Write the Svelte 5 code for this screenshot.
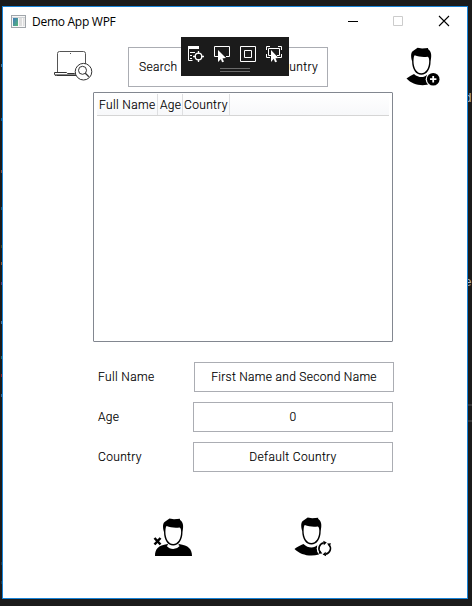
<script>
  const fields = [
    { label: 'Full Name', value: 'First Name and Second Name', shift: true, spacing: 0.3 },
    { label: 'Age', value: '0', spacing: 0.4 },
    { label: 'Country', value: 'Default Country', spacing: 0.36 }
  ];
  const leftMarks = [
    [64, '#4a748f'], [118, '#155c91'], [170, '#8b4a37'], [207, '#255a76'], [245, '#4d4819'],
    [262, '#9a5428'], [282, '#663568'], [321, '#4f7594'], [356, '#286a6b'], [374, '#9a2024'], [394, '#3b668b'], [562, '#26333d'], [581, '#213948']
  ];
</script>

{#snippet head()}
  <path d="M11 15C9.500 10 9.500 5.500 12.600 4.200L16.500 1.600l4.500.6 6-.5c-.3 1 .2 1.500 1 2 2.700 2.500 2.400 6.500 1.500 11.300C29.500 23 25.600 28.600 20.200 28.600S11 23 11 15z" fill="#000" />
  <path d="M12.400 15c0-3 .4-5.400 1.200-6 3.900 1.600 8 2 13 1.500.9.400 1.500 1.500 1.500 4.500 0 7-3.600 12.100-7.900 12.100S12.400 22 12.400 15z" fill="#fff" />
{/snippet}

<div class="desktop">
  {#each leftMarks as [y, color]}
    <i class="mark" style="top: {y}px; background: {color}"></i>
  {/each}
  <span class="code first">d</span>
  <span class="code second">e</span>
  <i class="line"></i><i class="line lower"></i>
  <main class="window">
    <header>
      <svg class="app-icon" width="16" height="16" viewBox="0 0 16 16">
        <defs>
          <linearGradient id="screen" x2="1" y2="1"><stop stop-color="#3f79bd" /><stop offset="1" stop-color="#56b775" /></linearGradient>
        </defs>
        <rect x=".5" y="1.500" width="14" height="12" fill="#f8f8f8" stroke="#a0a5aa" />
        <path d="M1 3.500h13" stroke="#d0d3d6" />
        <rect x="2" y="4" width="5" height="8" fill="url(#screen)" />
        <path d="M8 4h3v8H8zM12 4h1.500v8H12z" fill="#dedede" />
      </svg>
      <span class="title">Demo App WPF</span>
      <nav>
        <svg width="45" height="30"><path d="M13 14.500h10" stroke="#000" /></svg>
        <svg width="46" height="30"><path d="M13.500 9.500h9v9h-9z" fill="none" stroke="#ccc" /></svg>
        <svg width="41" height="30"><path d="M13 9l10 10m0-10l-10 10" stroke="#000" stroke-width="1.100" /></svg>
      </nav>
    </header>

    <section class="top">
      <svg class="laptop" width="40" height="34" viewBox="0 0 40 34" fill="none" stroke="#333">
        <path d="M4.500 23V4.500q0-2 2-2h24q2 0 2 2v11" stroke="#555" />
        <path d="M1.500 23.500h12l1 1h7l1-1h2M1.500 23.500v2q0 1 2 1h21" stroke="#333" />
        <path d="M2 25.500h22" stroke="#888" />
        <path d="M17 4.500h1" stroke="#555" />
        <circle cx="30.500" cy="22.700" r="8.300" fill="#fff" />
        <circle cx="29.500" cy="21.300" r="4" />
        <path d="M32.300 24.300l1.500 1.500m0-.2l2 2.200" stroke-width="1.300" />
      </svg>
      <div class="search">
        <span>Search</span><span>Country</span>
        <div class="toolbar">
          <div class="tools">
            <svg width="18" height="18" fill="none" stroke="#fff">
              <path d="M1 1h11v3H1z" fill="#fff" stroke="none" />
              <path d="M1.500 3v12.500h4M3 7.500h5M3 10.500h2M3 13.500h2" />
              <circle cx="11.500" cy="11.500" r="3.300" stroke-width="1.300" /><path d="M11.500 6v3m0 5v3M6 11.500h3m5 0h3" stroke-width="1.300" />
            </svg>
            <svg width="18" height="18" fill="none" stroke="#fff">
              <path d="M5 11.500H1.500v-10h15v10H13" /><path d="M5 5v12l3.500-3.500L13 13z" fill="#fff" stroke="none" /><path d="M8 12l2 5" stroke-width="2" />
            </svg>
            <svg width="18" height="18" fill="none" stroke="#fff">
              <path d="M1.500 1.500h15v15h-15zM5.500 5.500h7v7h-7z" />
            </svg>
            <svg width="18" height="18" fill="none" stroke="#fff">
              <path d="M1.500 5V1.500H5m8 0h3.500V5M1.500 9v3.500H5m8 0h3.500V9M6 10.500H3.500v-7h11v7H12" />
              <path d="M6 5v12l3-3.500 4.500-.5z" fill="#fff" stroke="none" /><path d="M9 12l2 5" stroke-width="2" />
            </svg>
          </div>
          <div class="grip"></div>
        </div>
      </div>
      <svg class="add" width="40" height="40" viewBox="0 0 40 40">
        <g transform="translate(-3.900 -.8)">{@render head()}</g>
        <path d="M1.500 31.500c2.500-2 5-3 7.500-4.500 4.500 4 10 4 13 .8.500 4 1.500 7.700 4 9.200C16.500 39.500 7.500 38 1.500 31.500z" />
        <circle cx="28.200" cy="32.200" r="7.500" fill="#fff" /><circle cx="28.200" cy="32.200" r="6.300" />
        <path d="M28.200 29v6.400M25 32.200h6.400" stroke="#fff" stroke-width="1.800" />
      </svg>
    </section>

    <section class="list">
      <div class="list-head">
        <span class="name-col">Full Name</span><span class="age-col">Age</span><span class="country-col">Country</span>
      </div>
    </section>

    <section class="form">
      {#each fields as field}
        <div class="row">
          <label for={field.label}>{field.label}</label>
          <div id={field.label} class:shift={field.shift} class="field" style="letter-spacing: {field.spacing}px">{field.value}</div>
        </div>
      {/each}
    </section>

    <footer>
      <svg width="40" height="40" viewBox="0 0 40 40">
        <path d="M2 39c0-7 3-10.500 12.500-12 3 5 8 5 11.500 0C35.500 28.500 39 32 39 39z" />
        <path d="M14.500 28.300c3 3.600 8.400 3.600 11.400 0" fill="none" stroke="#fff" stroke-width="2" />
        {@render head()}
        <path d="M1.500 21l6 6.500m0-6.500l-6 6.500" stroke="#000" stroke-width="2.500" />
      </svg>
      <svg width="40" height="40" viewBox="0 0 40 40">
        <g transform="translate(-1.800 -1)">{@render head()}</g>
        <path d="M1.500 32c2.500-2.500 6-3.500 9-5 4.500 4.500 11 4.500 14 .8-1 4 0 7.200 1.500 9.700-9 2.500-18.500.5-24.500-5.500z" />
        <circle cx="31.700" cy="31.500" r="8" fill="#fff" />
        <path d="M27.400 35.300a5.700 5.700 0 0 1 3.300-9.400M36 27.700a5.700 5.700 0 0 1-3.300 9.400" fill="none" stroke="#000" stroke-width="1.600" />
        <path d="M30.300 23.800l3.500 1.700-3 2.700zM33.100 39.200l-3.500-1.700 3-2.700zM34 26.500l4-.3-1.500 3.500zM29.400 36.500l-4 .3 1.500-3.500z" />
      </svg>
    </footer>
  </main>
</div>

<style>
  :global(body) { margin: 0; }
  .desktop { box-sizing: border-box; position: relative; width: 472px; height: 606px; padding: 6px 0 0 2px; background: #1b1b1b; overflow: hidden; }
  .mark { position: absolute; left: 1px; width: 1px; height: 3px; }
  .code { position: absolute; left: 464px; color: #b8b8b8; font: 13px/16px "Liberation Mono", monospace; }
  .first { top: 91px; }
  .second { top: 275px; }
  .line { position: absolute; right: 0; top: 404px; width: 4px; height: 2px; background: #363636; }
  .lower { top: 420px; }
  .window { box-sizing: border-box; position: relative; display: flex; flex-direction: column; width: 466px; height: 593px; border: 1px solid #1883d7; background: #fff; color: #000; font: 300 12px/16px Roboto, sans-serif; letter-spacing: .35px; -webkit-text-stroke: .15px #000; white-space: nowrap; }
  svg { display: block; flex: none; }
  header { display: flex; height: 30px; align-items: center; padding-left: 8px; }
  .title { margin-left: 5px; color: #000; font: 400 12px/16px "Open Sans", sans-serif; letter-spacing: -.27px; -webkit-text-stroke: 0; }
  nav { display: flex; margin-left: auto; }
  .top { display: flex; height: 55px; box-sizing: border-box; padding: 10px 19px 0 50px; align-items: flex-start; }
  .laptop { margin-top: 2px; }
  .search { position: relative; display: flex; flex: none; box-sizing: border-box; width: 200px; height: 40px; margin-left: 35px; padding: 0 9px 0 10px; border: 1px solid #abadb3; align-items: center; justify-content: space-between; }
  .toolbar { position: absolute; left: 52px; top: -11px; width: 108px; height: 39px; background: #1b1b1b; }
  .tools { display: flex; gap: 8px; padding: 8px 6px 0; }
  .grip { box-sizing: border-box; width: 30px; height: 4px; margin: 5px auto 0; border: solid #6a6a6a; border-width: 1px 0; }
  .add { margin-left: 77px; }
  .list { box-sizing: border-box; width: 300px; height: 250px; margin-left: 90px; padding: 1px 3px; border: 1px solid #828790; border-radius: 1px; }
  .list-head { display: flex; box-sizing: border-box; height: 22px; border-bottom: 1px solid #d5d5d5; background: linear-gradient(#fff, #f7f8fa); line-height: 22px; }
  .list-head span { box-sizing: border-box; border-right: 1px solid #dedfe1; }
  .name-col { width: 61px; padding-left: 2px; }
  .age-col { width: 25px; padding-left: 2px; }
  .country-col { width: 47px; padding-left: 1px; }
  .form { display: flex; flex-direction: column; gap: 10px; margin: 20px 0 0 95px; }
  .row { display: flex; height: 30px; align-items: center; }
  label { width: 95px; }
  .field { box-sizing: border-box; width: 200px; height: 30px; border: 1px solid #abadb3; line-height: 28px; text-align: center; }
  .shift { margin-left: 1px; }
  footer { display: flex; gap: 100px; margin: 45px 0 0 150px; }
</style>
